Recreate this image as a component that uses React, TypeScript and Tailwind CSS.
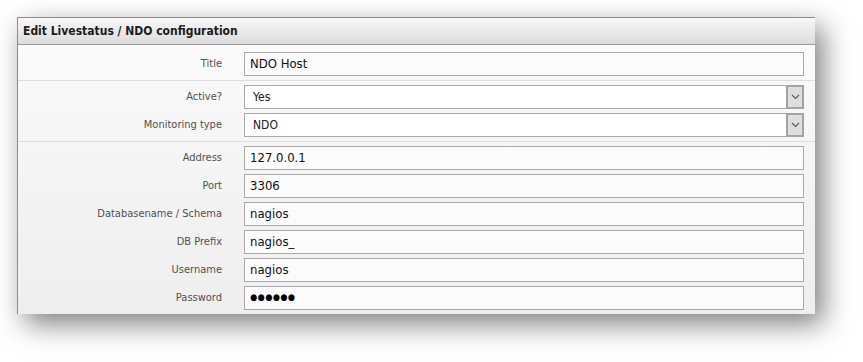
import React from 'react';

const font = { fontFamily: '"DejaVu Sans Condensed", "DejaVu Sans", sans-serif' };

type Field = { label: string; value: string; kind?: 'select' | 'password' };

const groups: Field[][] = [
  [{ label: 'Title', value: 'NDO Host' }],
  [
    { label: 'Active?', value: 'Yes', kind: 'select' },
    { label: 'Monitoring type', value: 'NDO', kind: 'select' },
  ],
  [
    { label: 'Address', value: '127.0.0.1' },
    { label: 'Port', value: '3306' },
    { label: 'Databasename / Schema', value: 'nagios' },
    { label: 'DB Prefix', value: 'nagios_' },
    { label: 'Username', value: 'nagios' },
    { label: 'Password', value: '', kind: 'password' },
  ],
];

const Chevron = () => (
  <svg width="9" height="6" viewBox="0 0 9 6" fill="none">
    <path d="M1 1l3.5 3.5L8 1" stroke="#555" strokeWidth="1.1" />
  </svg>
);

const FieldRow: React.FC<{ field: Field }> = ({ field }) => (
  <div className="flex items-center h-[24px]">
    <div className="w-[205px] text-right text-[11px] text-[#505050] pr-[1px]">{field.label}</div>
    <div className="ml-[21px] w-[560px] h-[24px]">
      {field.kind === 'select' ? (
        <div className="flex h-full border border-[#a9a9a9] bg-white">
          <div className="flex-1 flex items-center pl-[8px] text-[12px] text-[#222]">{field.value}</div>
          <div className="w-[18px] -my-[1px] -mr-[1px] flex items-center justify-center bg-[#dedede] border-2 border-[#a3a3a3]">
            <Chevron />
          </div>
        </div>
      ) : (
        <div className="flex items-center h-full border border-[#a9a9a9] bg-[#fbfbfb] pl-[5px] text-[13px] text-[#111]">
          {field.kind === 'password' ? (
            <span className="text-[9px] tracking-[0.5px] text-black">●●●●●●</span>
          ) : (
            field.value
          )}
        </div>
      )}
    </div>
  </div>
);

const App: React.FC = () => {
  return (
    <div className="w-[863px] h-[362px] bg-white pt-[17px] pl-[17px]" style={font}>
      <div className="w-[798px] border-t border-l border-[#8c8c8c] shadow-[8px_10px_26px_rgba(0,0,0,0.5)]">
        {/* Header */}
        <div className="h-[27px] flex items-center px-[5px] bg-gradient-to-b from-[#f8f8f8] to-[#dcdcdc] border-b border-[#9a9a9a]">
          <span className="text-[12px] font-bold text-[#1c1c1c]">Edit Livestatus / NDO configuration</span>
        </div>

        {/* Body */}
        <div className="bg-gradient-to-b from-[#fafafa] to-[#eeeeee]">
          {groups.map((group, gi) => (
            <div
              key={gi}
              className={
                gi === 0
                  ? 'pt-[7px] pb-[4px] border-b border-[#dddddd] flex flex-col gap-[4px]'
                  : gi === 1
                  ? 'pt-[4px] pb-[4px] border-b border-[#dddddd] flex flex-col gap-[4px]'
                  : 'pt-[4px] pb-[4px] flex flex-col gap-[4px]'
              }
            >
              {group.map((f) => (
                <FieldRow key={f.label} field={f} />
              ))}
            </div>
          ))}
        </div>
      </div>
    </div>
  );
};

export default App;
